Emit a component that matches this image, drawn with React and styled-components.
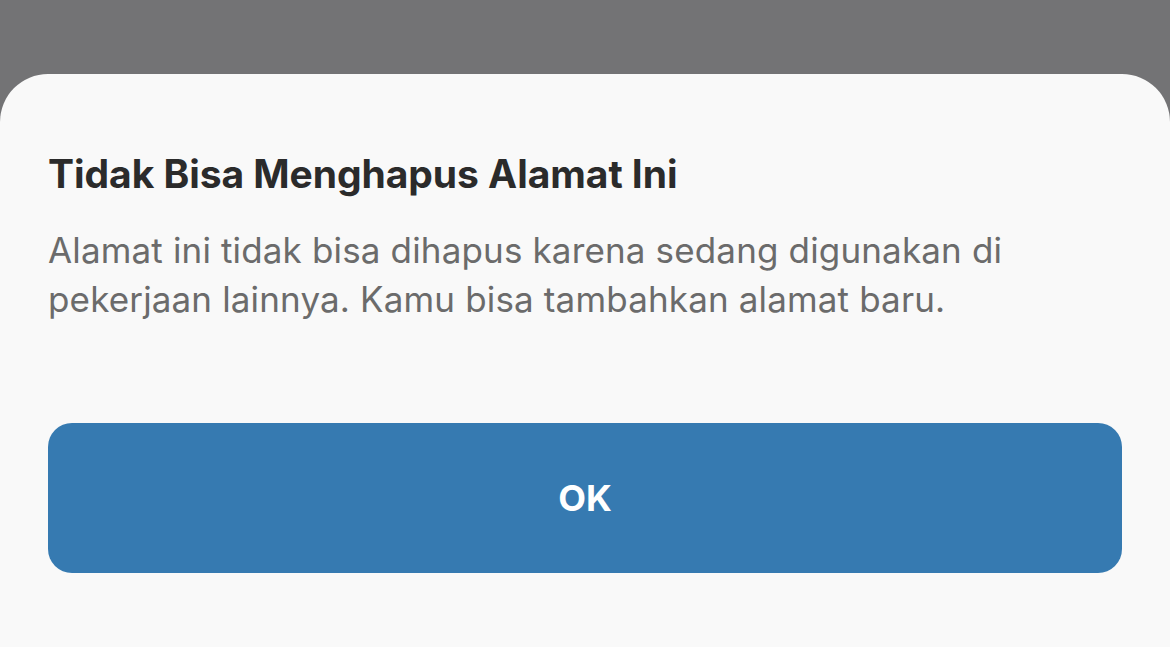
import React from "react";
import styled, { createGlobalStyle } from "styled-components";

const Global = createGlobalStyle`
  html, body { margin: 0; padding: 0; background: #737375; }
  body { font-family: Inter, "Noto Sans", sans-serif; -webkit-font-smoothing: antialiased; }
`;

const Backdrop = styled.div`
  width: 1170px;
  height: 647px;
  background: #737375;
  display: flex;
  flex-direction: column;
  justify-content: flex-end;
  overflow: hidden;
`;

const Sheet = styled.div`
  height: 573px;
  background: #f9f9f9;
  border-radius: 48px 48px 0 0;
  padding: 76px 48px 0;
  box-sizing: border-box;
  display: flex;
  flex-direction: column;
`;

const Title = styled.h1`
  margin: 0;
  font-size: 39px;
  line-height: 48px;
  font-weight: 700;
  color: #2b2b2b;
  letter-spacing: -0.05px;
`;

const Message = styled.p`
  margin: 28px 0 0;
  font-size: 35px;
  line-height: 49px;
  font-weight: 400;
  color: #6b6b6b;
  letter-spacing: 0.15px;
`;

const Button = styled.button`
  margin-top: 99px;
  height: 150px;
  width: 100%;
  border: none;
  border-radius: 24px;
  background: #367ab1;
  color: #ffffff;
  font-family: inherit;
  font-size: 36px;
  font-weight: 700;
  padding: 0;
`;

export default function App() {
  return (
    <>
      <Global />
      <Backdrop>
        <Sheet>
          <Title>Tidak Bisa Menghapus Alamat Ini</Title>
          <Message>
            Alamat ini tidak bisa dihapus karena sedang digunakan di
            <br />
            pekerjaan lainnya. Kamu bisa tambahkan alamat baru.
          </Message>
          <Button>OK</Button>
        </Sheet>
      </Backdrop>
    </>
  );
}
